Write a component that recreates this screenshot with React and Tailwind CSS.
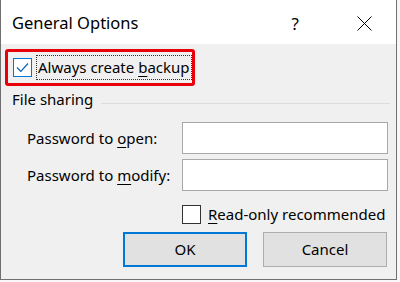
export default function App() {
  const font = { fontFamily: '"Noto Sans", "Open Sans", sans-serif' };
  const u = "underline underline-offset-[3px] decoration-1";
  return (
    <div className="w-[400px] h-[282px] bg-[#f7f7f7] overflow-hidden text-black" style={font}>
      <div className="w-[397px] h-[280px] bg-[#f0f0f0] border-l border-r border-b border-[#707070] flex flex-col">
        {/* Title bar */}
        <div className="h-[44px] bg-white flex items-center shrink-0 pt-[3px]">
          <span className="pl-[11px] text-[16.5px] leading-none whitespace-nowrap">General Options</span>
          <div className="ml-auto flex items-center">
            <span className="text-[17px] leading-none pr-[58px]">?</span>
            <svg width="15" height="15" viewBox="0 0 15 15" className="mr-[24px]">
              <path d="M0.5 0.5 L14.5 14.5 M14.5 0.5 L0.5 14.5" stroke="#000" strokeWidth="1" fill="none" />
            </svg>
          </div>
        </div>

        {/* Always create backup */}
        <div className="mt-[5px] ml-[4px] w-[190px] h-[37px] border-[3px] border-[#e8000b] rounded-[3px] flex items-center pl-[5px]">
          <div className="w-[19px] h-[19px] border border-[#0078d7] bg-white flex items-center justify-center shrink-0">
            <svg width="15" height="15" viewBox="0 0 15 15">
              <path d="M2 7.5 L5.8 11.3 L13 3.5" stroke="#0062b8" strokeWidth="1.2" fill="none" />
            </svg>
          </div>
          <div className="ml-[4px] border border-dotted border-[#333] px-[1px] h-[25px] flex items-center">
            <span className="text-[15px] leading-none whitespace-nowrap">
              Always create <span className={u}>b</span>ackup
            </span>
          </div>
        </div>

        {/* File sharing */}
        <div className="flex items-center mt-[3px] pl-[11px] h-[20px]">
          <span className="text-[15px] leading-none whitespace-nowrap">File sharing</span>
          <div className="flex-1 ml-[8px] mr-[6px] border-t border-[#dcdcdc] mt-[8px]" />
        </div>

        {/* Password rows */}
        <div className="mt-[13px] flex flex-col gap-[5px] pl-[26px]">
          <div className="flex items-center h-[32px]">
            <span className="w-[155px] text-[15px] leading-none whitespace-nowrap">
              Password to <span className={u}>o</span>pen:
            </span>
            <div className="w-[206px] h-[32px] bg-white border border-[#a8a8a8]" />
          </div>
          <div className="flex items-center h-[32px]">
            <span className="w-[155px] text-[15px] leading-none whitespace-nowrap">
              Password to <span className={u}>m</span>odify:
            </span>
            <div className="w-[206px] h-[32px] bg-white border border-[#a8a8a8]" />
          </div>
        </div>

        {/* Read-only */}
        <div className="mt-[14px] flex items-center pl-[181px]">
          <div className="w-[19px] h-[19px] border border-[#333] bg-white shrink-0" />
          <span className="ml-[7px] text-[15px] leading-none whitespace-nowrap">
            <span className={u}>R</span>ead-only recommended
          </span>
        </div>

        {/* Buttons */}
        <div className="mt-[8px] flex pl-[122px] gap-[16px]">
          <div className="w-[124px] h-[35px] bg-[#e1e1e1] border-2 border-[#0078d7] flex items-center justify-center">
            <span className="text-[15px] leading-none">OK</span>
          </div>
          <div className="w-[124px] h-[35px] bg-[#e1e1e1] border border-[#adadad] flex items-center justify-center">
            <span className="text-[15px] leading-none">Cancel</span>
          </div>
        </div>
      </div>
    </div>
  );
}
